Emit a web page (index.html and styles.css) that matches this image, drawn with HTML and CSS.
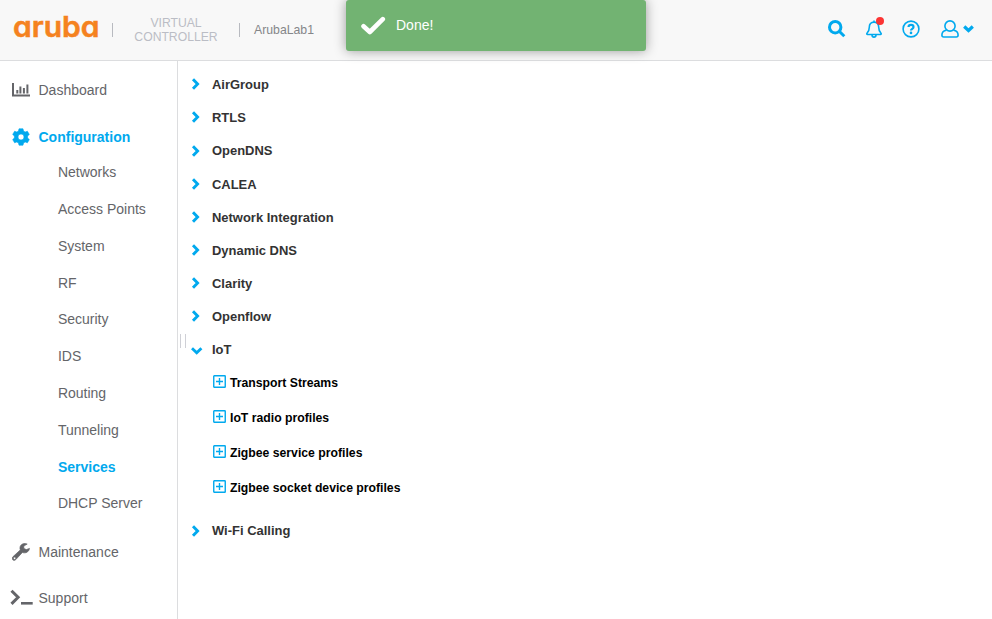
FILE: index.html
```html
<!DOCTYPE html>
<html lang="en">
<head>
<meta charset="utf-8">
<title>Virtual Controller</title>
<link rel="stylesheet" href="styles.css">
</head>
<body>
<header class="topbar">
  <svg class="logo" viewBox="0 0 86 36"><text x="0" y="24.700" textLength="86.500" lengthAdjust="spacingAndGlyphs">aruba</text></svg>
  <span class="divider"></span>
  <span class="product">VIRTUAL CONTROLLER</span>
  <span class="divider"></span>
  <span class="site">ArubaLab1</span>
  <nav class="tools">
    <svg class="search" width="18" height="18" viewBox="0 0 18 18"><circle cx="7.2" cy="7.2" r="5.7"/><path d="M11.5 11.5l4.800 4.800"/></svg>
    <span class="bell">
      <svg width="16" height="18" viewBox="0 0 16 18"><path d="M8 2.100C4.900 2.100 3.300 4.300 3.300 7.200c0 3.200-.9 4.700-2.300 6.100-.4.5-.2 1.200.5 1.200h13c.7 0 .9-.7.5-1.200-1.400-1.400-2.300-2.900-2.300-6.100C12.700 4.300 11.100 2.100 8 2.100zM8 .5v1.500M6 15.200c.2 2.500 3.800 2.500 4 0"/></svg>
      <i class="badge"></i>
    </span>
    <svg class="help" width="18" height="18" viewBox="0 0 18 18"><circle cx="9" cy="9" r="7.900"/><path class="mark" d="M6.500 7C6.700 4.200 11.500 4.300 11.500 7c0 1.900-2.500 1.700-2.500 3.500"/><circle class="dot" cx="9" cy="12.900" r="1.300"/></svg>
    <svg class="user" width="18" height="18" viewBox="0 0 18 18"><circle cx="9" cy="6" r="5.100"/><path d="M5.500 10.200C2.500 10.600.9 12.400.9 15c0 1.200.6 2 1.800 2h12.600c1.200 0 1.800-.8 1.800-2 0-2.600-1.600-4.400-4.600-4.800"/></svg>
    <svg class="caret" width="11" height="8" viewBox="0 0 11 8"><path d="M1.200 1.500l4.300 4 4.300-4"/></svg>
  </nav>
</header>

<div class="toast">
  <svg width="26" height="20" viewBox="0 0 26 20"><path d="M3.500 10.300l6.300 5.700L22.800 3.200"/></svg>
  <span>Done!</span>
</div>

<div class="layout">
  <aside class="sidebar">
    <a class="item"><span class="ico"><svg width="18" height="14" viewBox="0 0 18 14"><path d="M0 0h2v11.500h16V13.500H0zM4.300 7h2v3.500h-2zM7.400 3.500h2v7h-2zM10.900 5h2v5.500h-2zM14.400 1.500h2v9h-2z"/></svg></span>Dashboard</a>
    <a class="item active"><span class="ico"><svg width="18" height="18" viewBox="0 0 18 18"><path fill-rule="evenodd" stroke="currentColor" stroke-width=".6" stroke-linejoin="round" d="M7 .8h4l.5 2.200 1.700 1 2.200-.8 1.900 3.300-1.700 1.500v2l1.700 1.500-1.900 3.300-2.200-.8-1.700 1-.5 2.200H7l-.5-2.200-1.700-1-2.200.8-1.900-3.300L2.400 10V8L.7 6.500l1.900-3.300 2.200.8 1.700-1zM9 6a3 3 0 100 6 3 3 0 000-6z"/></svg></span>Configuration</a>
    <div class="subnav">
      <a>Networks</a>
      <a>Access Points</a>
      <a>System</a>
      <a>RF</a>
      <a>Security</a>
      <a>IDS</a>
      <a>Routing</a>
      <a>Tunneling</a>
      <a class="active">Services</a>
      <a>DHCP Server</a>
    </div>
    <a class="item"><span class="ico"><svg width="18" height="18" viewBox="0 0 18 18"><path fill-rule="evenodd" stroke="currentColor" stroke-width=".7" d="M15.200 1.100C12.500-.2 9.200.8 8.200 3.500c-.4 1.200-.3 2.400.1 3.400L.9 13.800c-1 1-.9 2.200-.1 3 .9.800 2 .8 3-.2l6.600-7.200c2.900 1.300 6.500-.3 7.100-4l-3.200 1.200-2.500-1.200V3zM2.600 14.100a1.200 1.200 0 110 2.400 1.200 1.200 0 010-2.400z"/></svg></span>Maintenance</a>
    <a class="item"><span class="ico"><svg class="prompt" width="24" height="17" viewBox="0 0 24 17"><path d="M1.500 1.700l6.600 6.600-6.600 6.600" fill="none" stroke="currentColor" stroke-width="3"/><path d="M11 13h11.700v2.600H11z"/></svg></span>Support</a>
  </aside>
  <div class="grip"></div>
  <main class="services">
    <div class="row"><svg class="chev" viewBox="0 0 12 12"><path d="M2 1.200L6.600 6 2 10.800"/></svg>AirGroup</div>
    <div class="row"><svg class="chev" viewBox="0 0 12 12"><path d="M2 1.200L6.600 6 2 10.800"/></svg>RTLS</div>
    <div class="row"><svg class="chev" viewBox="0 0 12 12"><path d="M2 1.200L6.600 6 2 10.800"/></svg>OpenDNS</div>
    <div class="row"><svg class="chev" viewBox="0 0 12 12"><path d="M2 1.200L6.600 6 2 10.800"/></svg>CALEA</div>
    <div class="row"><svg class="chev" viewBox="0 0 12 12"><path d="M2 1.200L6.600 6 2 10.800"/></svg>Network Integration</div>
    <div class="row"><svg class="chev" viewBox="0 0 12 12"><path d="M2 1.200L6.600 6 2 10.800"/></svg>Dynamic DNS</div>
    <div class="row"><svg class="chev" viewBox="0 0 12 12"><path d="M2 1.200L6.600 6 2 10.800"/></svg>Clarity</div>
    <div class="row"><svg class="chev" viewBox="0 0 12 12"><path d="M2 1.200L6.600 6 2 10.800"/></svg>Openflow</div>
    <div class="row"><svg class="chev" viewBox="0 0 12 12"><path d="M1 4.300l4.700 4.400 4.700-4.400"/></svg>IoT</div>
    <div class="profiles">
      <div class="profile"><svg viewBox="0 0 13 13"><rect x=".75" y=".75" width="11.500" height="11.500" rx=".5"/><path d="M3 6.500h7M6.500 3v7"/></svg>Transport Streams</div>
      <div class="profile"><svg viewBox="0 0 13 13"><rect x=".75" y=".75" width="11.500" height="11.500" rx=".5"/><path d="M3 6.500h7M6.500 3v7"/></svg>IoT radio profiles</div>
      <div class="profile"><svg viewBox="0 0 13 13"><rect x=".75" y=".75" width="11.500" height="11.500" rx=".5"/><path d="M3 6.500h7M6.500 3v7"/></svg>Zigbee service profiles</div>
      <div class="profile"><svg viewBox="0 0 13 13"><rect x=".75" y=".75" width="11.500" height="11.500" rx=".5"/><path d="M3 6.500h7M6.500 3v7"/></svg>Zigbee socket device profiles</div>
    </div>
    <div class="row"><svg class="chev" viewBox="0 0 12 12"><path d="M2 1.200L6.600 6 2 10.800"/></svg>Wi-Fi Calling</div>
  </main>
</div>
</body>
</html>
```
FILE: styles.css
```css
* { box-sizing: border-box; }
body {
  margin: 0;
  height: 619px;
  overflow: hidden;
  background: #fff;
  color: #646569;
  font-family: "Liberation Sans", Arial, sans-serif;
  font-size: 14px;
}
svg { display: block; flex: none; }

.topbar {
  display: flex;
  align-items: center;
  height: 61px;
  padding: 0 18px 0 13px;
  background: #f8f8f8;
  border-bottom: 1px solid #dcdddf;
}
.logo { width: 86px; height: 36px; overflow: visible; }
.logo text {
  fill: #f58220;
  stroke: #f58220;
  stroke-width: .5;
  font: 600 28.5px Inter, sans-serif;
  font-feature-settings: "cv11";
}
.divider { width: 1px; height: 14px; margin-left: 13px; background: #b8bac0; }
.product {
  width: 86px;
  margin-left: 20px;
  font-size: 12.2px;
  line-height: 14px;
  text-align: center;
  color: #bbbdc5;
}
.product + .divider { margin-left: 20px; }
.site { margin-left: 14px; font-size: 12.25px; color: #858689; }
.tools { display: flex; align-items: center; margin: -2px 0 0 auto; color: #01a9ee; }
.tools svg { fill: none; stroke: currentColor; stroke-width: 1.6; }
.tools .search { stroke-width: 3; }
.bell { position: relative; margin-left: 20px; }
.badge {
  position: absolute;
  top: -3px;
  right: -2px;
  width: 8px;
  height: 8px;
  border-radius: 50%;
  background: #fc3433;
}
.help { margin-left: 20px; }
.tools .mark { stroke-width: 2.2; }
.tools .dot { fill: currentColor; stroke: none; }
.user { margin-left: 21px; }
.tools .caret { margin-left: 4px; stroke-width: 3.2; }

.toast {
  position: absolute;
  top: 0;
  left: 346px;
  display: flex;
  align-items: center;
  gap: 10px;
  width: 300px;
  height: 51px;
  padding-left: 14px;
  border-radius: 3px;
  background: #72b372;
  box-shadow: 0 0 12px #999;
  color: #fff;
}
.toast span { margin-top: -2px; }
.toast svg { fill: none; stroke: #fff; stroke-width: 4.6; stroke-linecap: round; stroke-linejoin: round; }

.layout { display: flex; height: 558px; }
.sidebar { width: 178px; padding-top: 12px; border-right: 1px solid #dcdddf; }
.item { display: flex; align-items: center; height: 34px; margin-bottom: 13px; }
.ico { display: flex; width: 38.5px; padding-left: 11.5px; }
.ico svg { fill: currentColor; }
.ico .prompt { margin-left: -2px; }
.active { color: #01a9ee; font-weight: 700; }
.subnav { margin: -13px 0 13px; padding-left: 57.9px; }
.subnav a { display: flex; align-items: center; height: 36.78px; }
.subnav + .item { margin-bottom: 12px; }

.grip {
  align-self: center;
  width: 6px;
  height: 14px;
  margin: 2px 0 0 2px;
  border: solid #cfd0d6;
  border-width: 0 1px;
}
.services { padding: 7px 0 0 5px; color: #333; font-size: 12.96px; font-weight: 700; }
.row { display: flex; align-items: center; height: 33.17px; }
.chev { width: 12px; height: 12px; margin: -.5px 9px 0 0; fill: none; stroke: #01a9ee; stroke-width: 2.9; }
.profiles { height: 148px; margin: -1px 0 1px; }
.profile { display: flex; align-items: center; gap: 4.5px; height: 35px; padding-left: 21.5px; color: #000; font-size: 12.22px; }
.profile svg { width: 13px; height: 13px; margin-top: -2px; fill: none; stroke: #01a9ee; stroke-width: 1.4; }
```
